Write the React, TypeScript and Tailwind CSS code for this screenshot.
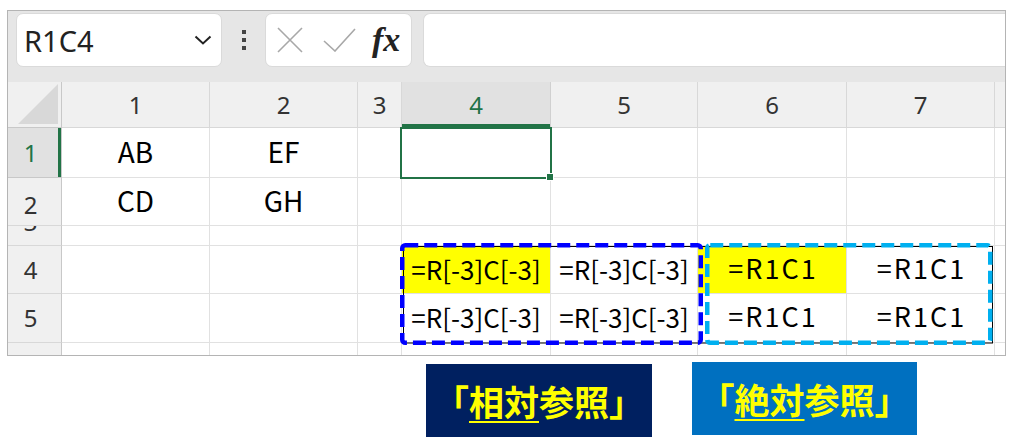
import React from 'react';

const cellFont = "font-['Noto_Sans_CJK_JP','Noto_Sans',sans-serif]";

type HeadProps = { children?: React.ReactNode; active?: boolean };

const ColHead = ({ children, active }: HeadProps) => (
  <div
    className={
      active
        ? "flex items-center justify-center border-r border-b border-[#d0d0d0] bg-[#e1e1e1] text-[#217346] text-[24px] shadow-[inset_0_-3px_0_#217346]"
        : "flex items-center justify-center border-r border-b border-[#d8d8d8] bg-[#f0f0f0] text-[#333] text-[24px]"
    }
  >
    {children}
  </div>
);

const RowHead = ({ children, active }: HeadProps) => (
  <div
    className={
      active
        ? "flex items-center justify-center pr-[8px] border-r border-b border-[#c8c8c8] bg-[#e1e1e1] text-[#217346] text-[24px] shadow-[inset_-3px_0_0_#217346]"
        : "flex items-center justify-center pr-[8px] border-r border-b border-[#c8c8c8] border-b-[#d8d8d8] bg-[#f0f0f0] text-[#333] text-[24px]"
    }
  >
    {children}
  </div>
);

type CellProps = { children?: React.ReactNode; yellow?: boolean; size?: string };

const Cell = ({ children, yellow, size = 'text-[26px]' }: CellProps) => (
  <div
    className={`flex items-center justify-center pb-[3px] whitespace-nowrap border-r border-b border-[#e1e1e1] text-black ${cellFont} ${size} ${yellow ? 'bg-[#ffff00]' : 'bg-white'}`}
  >
    {children}
  </div>
);

const r1c1 = 'text-[27px] tracking-[2px] pl-[2px]';

export default function App() {
  return (
    <div className="relative w-[1013px] h-[443px] bg-white overflow-hidden font-['Noto_Sans','Open_Sans',sans-serif]">
      {/* spreadsheet window */}
      <div className="ml-[7px] mt-[10px] w-[999px] border border-[#b4b4b4] bg-[#e6e6e6]">
        {/* name box + formula bar */}
        <div className="flex items-start pt-[2px] pb-[15px] pl-[8px]">
          <div className="flex items-center justify-between w-[206px] h-[54px] pl-[7px] pr-[9px] bg-white rounded-[7px] border border-[#dadada]">
            <span className="text-[29px] text-[#222] leading-none">R1C4</span>
            <svg width="18" height="10" viewBox="0 0 18 10" fill="none">
              <path d="M1.5 1.5 L9 8.5 L16.5 1.5" stroke="#222" strokeWidth="2" />
            </svg>
          </div>
          <div className="flex flex-col gap-[4px] ml-[20px] mt-[17px]">
            <div className="w-[4px] h-[4px] bg-[#444]" />
            <div className="w-[4px] h-[4px] bg-[#444]" />
            <div className="w-[4px] h-[4px] bg-[#444]" />
          </div>
          <div className="flex items-center ml-[19px] w-[147px] h-[54px] pl-[11px] bg-white rounded-[7px] border border-[#dadada]">
            <svg width="26" height="26" viewBox="0 0 26 26" fill="none">
              <path d="M1 1 L25 25 M25 1 L1 25" stroke="#a8a8a8" strokeWidth="1.6" />
            </svg>
            <svg className="ml-[20px]" width="33" height="24" viewBox="0 0 33 24" fill="none">
              <path d="M1 13 L12 23 L32 1" stroke="#a8a8a8" strokeWidth="1.6" />
            </svg>
            <span className="ml-[16px] text-[34px] leading-none italic font-bold text-[#222] font-['Liberation_Serif',serif]">
              fx
            </span>
          </div>
          <div className="flex-1 ml-[11px] h-[54px] bg-white rounded-l-[7px] border border-r-0 border-[#dadada]" />
        </div>

        {/* sheet grid */}
        <div className="grid grid-cols-[54px_148px_148px_44px_149px_147px_149px_148px_1fr] grid-rows-[46px_50px_48px_20px_48px_49px_12px] bg-white">
          {/* corner */}
          <div className="flex items-end justify-end p-[3px] border-r border-b border-[#c8c8c8] bg-[#f0f0f0]">
            <svg width="40" height="40" viewBox="0 0 40 40">
              <path d="M40 0 L40 40 L0 40 Z" fill="#d8d8d8" />
            </svg>
          </div>
          <ColHead>1</ColHead>
          <ColHead>2</ColHead>
          <ColHead>3</ColHead>
          <ColHead active>4</ColHead>
          <ColHead>5</ColHead>
          <ColHead>6</ColHead>
          <ColHead>7</ColHead>
          <div className="border-b border-[#d8d8d8] bg-[#f0f0f0]" />

          {/* row 1 */}
          <RowHead active>1</RowHead>
          <Cell size="text-[28px]">AB</Cell>
          <Cell size="text-[28px]">EF</Cell>
          <Cell />
          <div className="relative border-r border-b border-[#e1e1e1] bg-white">
            <div className="absolute -left-[2px] -top-[1px] w-[152px] h-[52px] border-[2px] border-[#217346]" />
            <div className="absolute -right-[4px] -bottom-[4px] w-[8px] h-[8px] bg-[#217346] border border-white" />
          </div>
          <Cell />
          <Cell />
          <Cell />
          <div className="border-b border-[#e1e1e1]" />

          {/* row 2 */}
          <RowHead>
            <span className="mt-[6px]">2</span>
          </RowHead>
          <Cell size="text-[28px]">CD</Cell>
          <Cell size="text-[28px]">GH</Cell>
          <Cell />
          <Cell />
          <Cell />
          <Cell />
          <Cell />
          <div className="border-b border-[#e1e1e1]" />

          {/* row 3 (very short, label clipped) */}
          <div className="flex justify-center pr-[8px] overflow-hidden border-r border-b border-[#c8c8c8] border-b-[#d8d8d8] bg-[#f0f0f0] text-[#333] text-[24px]">
            <span className="leading-[24px] -mt-[16px]">3</span>
          </div>
          <Cell />
          <Cell />
          <Cell />
          <Cell />
          <Cell />
          <Cell />
          <Cell />
          <div className="border-b border-[#e1e1e1]" />

          {/* row 4 */}
          <RowHead>4</RowHead>
          <Cell />
          <Cell />
          <Cell />
          <Cell yellow>=R[-3]C[-3]</Cell>
          <Cell>=R[-3]C[-3]</Cell>
          <Cell yellow size={r1c1}>=R1C1</Cell>
          <Cell size={r1c1}>=R1C1</Cell>
          <div className="border-b border-[#e1e1e1]" />

          {/* row 5 */}
          <RowHead>5</RowHead>
          <Cell />
          <Cell />
          <Cell />
          <Cell>=R[-3]C[-3]</Cell>
          <Cell>=R[-3]C[-3]</Cell>
          <Cell size={r1c1}>=R1C1</Cell>
          <Cell size={r1c1}>=R1C1</Cell>
          <div className="border-b border-[#e1e1e1]" />

          {/* partial row below */}
          <div className="border-r border-[#c8c8c8] bg-[#f0f0f0]" />
          <div className="border-r border-[#e1e1e1]" />
          <div className="border-r border-[#e1e1e1]" />
          <div className="border-r border-[#e1e1e1]" />
          <div className="border-r border-[#e1e1e1]" />
          <div className="border-r border-[#e1e1e1]" />
          <div className="border-r border-[#e1e1e1]" />
          <div className="border-r border-[#e1e1e1]" />
          <div />
        </div>
      </div>

      {/* captions */}
      <div className={`flex items-start gap-[40px] ml-[426px] mt-[6px] ${cellFont}`}>
        <div className="flex items-center justify-center mt-[2px] w-[226px] h-[73px] bg-[#002060] text-[#ffff00] text-[35px] font-bold leading-none">
          <span>「</span>
          <span className="underline decoration-2 underline-offset-[5px]">相対</span>
          <span>参照」</span>
        </div>
        <div className="flex items-center justify-center w-[225px] h-[73px] bg-[#0070c0] text-[#ffff00] text-[35px] font-bold leading-none">
          <span>「</span>
          <span className="underline decoration-2 underline-offset-[5px]">絶対</span>
          <span>参照」</span>
        </div>
      </div>

      {/* dashed annotation frames over the grid */}
      <svg className="absolute left-0 top-0 pointer-events-none" width="1013" height="443" viewBox="0 0 1013 443" fill="none">
        <rect x="403.5" y="246.5" width="589" height="96.5" stroke="#000" strokeWidth="1" />
        <rect x="402.25" y="245.25" width="298.5" height="97.5" rx="3" stroke="#0000ff" strokeWidth="4.5" strokeDasharray="13 6" />
        <rect x="707.25" y="245.25" width="283" height="97.5" rx="3" stroke="#00b0f0" strokeWidth="4.5" strokeDasharray="13 6" />
      </svg>
    </div>
  );
}
